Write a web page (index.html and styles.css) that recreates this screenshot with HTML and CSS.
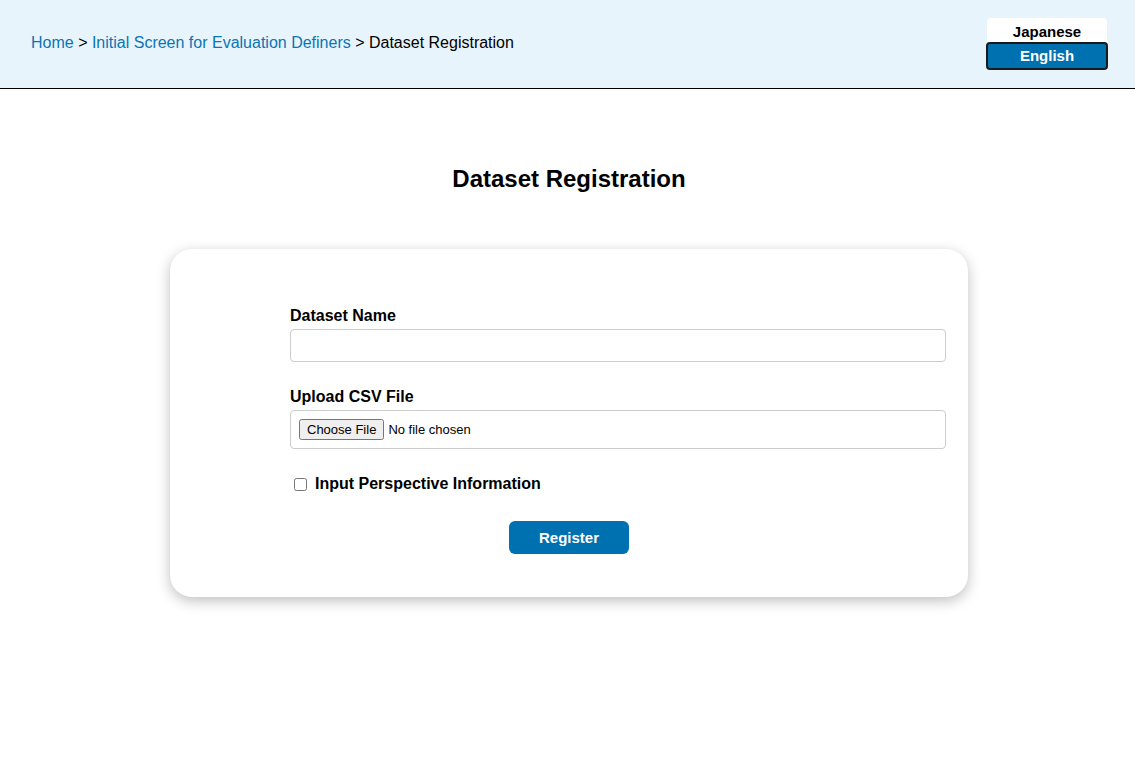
FILE: index.html
```html
<!DOCTYPE html>
<html lang="en">
<head>
<meta charset="utf-8">
<title>Dataset Registration</title>
<link rel="stylesheet" href="styles.css">
</head>
<body>
<header class="topbar">
  <nav class="crumbs">
    <a href="#">Home</a> &gt; <a href="#">Initial Screen for Evaluation Definers</a> &gt; <span>Dataset Registration</span>
  </nav>
  <div class="lang">
    <button class="lang-btn">Japanese</button>
    <button class="lang-btn active">English</button>
  </div>
</header>
<main class="main">
  <h1 class="title">Dataset Registration</h1>
  <form class="card">
    <div class="fields">
      <label class="label" for="dsname">Dataset Name</label>
      <input class="text-input" id="dsname" type="text">
      <label class="label label-gap" for="csv">Upload CSV File</label>
      <div class="file-box"><input id="csv" type="file"></div>
      <label class="check-row"><input type="checkbox" class="check"> <span>Input Perspective Information</span></label>
    </div>
    <button type="button" class="submit">Register</button>
  </form>
</main>
</body>
</html>
```
FILE: styles.css
```css
* { box-sizing: border-box; }
html, body { margin: 0; padding: 0; background: #fff; }
body { font-family: "Liberation Sans", Arial, sans-serif; color: #000; }

.topbar {
  height: 89px;
  background: #e8f4fb;
  border-bottom: 1px solid #000;
  display: flex;
  align-items: center;
  justify-content: space-between;
  padding: 0 27px 0 31px;
}
.crumbs { font-size: 16px; margin-top: -2px; }
.crumbs a { color: #0a74b4; text-decoration: none; }
.lang { display: flex; flex-direction: column; align-items: center; margin-top: -1px; }
.lang-btn {
  font-family: inherit;
  font-weight: bold;
  font-size: 15px;
  background: #fff;
  border: none;
  border-radius: 4px 4px 0 0;
  width: 120px;
  height: 24px;
  padding: 3px 0 0;
  color: #000;
}
.lang-btn.active {
  background: #0071b0;
  color: #fff;
  border: 2px solid #1a1a1a;
  border-radius: 4px;
  width: 122px;
  height: 28px;
  padding: 0;
}

.main { display: flex; flex-direction: column; align-items: center; padding: 0 0 40px 3px; }
.title {
  font-size: 24px;
  line-height: 28px;
  margin: 76px 0 56px;
}
.card {
  width: 798px;
  background: #fff;
  border-radius: 22px;
  box-shadow: 0 4px 14px rgba(0,0,0,0.25);
  padding: 58px 120px 43px;
  display: flex;
  flex-direction: column;
  align-items: center;
}
.fields { width: 100%; display: flex; flex-direction: column; align-items: flex-start; }
.label {
  font-weight: bold;
  font-size: 16px;
  line-height: 18px;
  margin-bottom: 4px;
}
.label-gap { margin-top: 26px; }
.text-input {
  width: calc(100% + 98px);
  height: 33px;
  border: 1px solid #ccc;
  border-radius: 4px;
  font-size: 14px;
  padding: 0 8px;
}
.file-box {
  width: calc(100% + 98px);
  border: 1px solid #ccc;
  border-radius: 4px;
  padding: 8px;
  height: 39px;
  display: flex;
  align-items: center;
  font-size: 13px;
}
.file-box input { font-family: "Liberation Sans", Arial, sans-serif; font-size: 13px; }
.check-row {
  margin-top: 26px;
  display: flex;
  align-items: center;
  font-weight: bold;
  font-size: 16px;
  line-height: 18px;
}
.check { margin: 0 8px 0 4px; width: 13px; height: 13px; }
.submit {
  margin-top: 28px;
  width: 120px;
  height: 33px;
  background: #0071b0;
  color: #fff;
  border: none;
  border-radius: 6px;
  font-family: inherit;
  font-weight: bold;
  font-size: 15px;
}
```
